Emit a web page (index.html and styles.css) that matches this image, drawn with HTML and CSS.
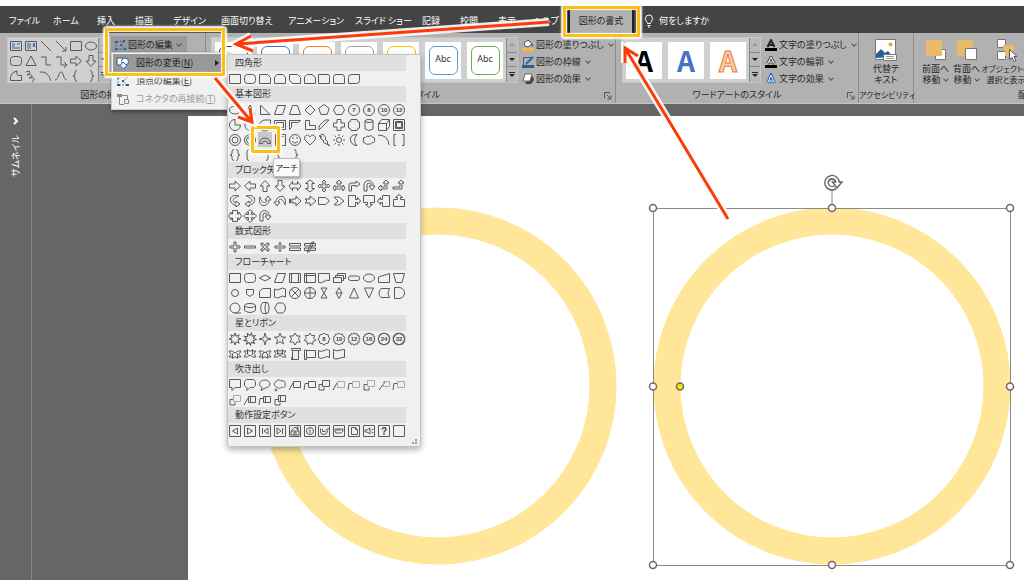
FILE: index.html
```html
<!DOCTYPE html>
<html lang="ja">
<head>
<meta charset="utf-8">
<title>図形の書式</title>
<link rel="stylesheet" href="styles.css">
</head>
<body>
<div class="app">
  <nav class="tabs" aria-label="リボン タブ">
    <button class="tab tab-kana">ファイル</button>
    <button class="tab tab-kana">ホーム</button>
    <button class="tab">挿入</button>
    <button class="tab">描画</button>
    <button class="tab tab-mid">デザイン</button>
    <button class="tab tab-wide">画面切り替え</button>
    <button class="tab tab-wide">アニメーション</button>
    <button class="tab tab-wide">スライド ショー</button>
    <button class="tab">記録</button>
    <button class="tab">校閲</button>
    <button class="tab tab-slim">表示</button>
    <button class="tab tab-slim">ヘルプ</button>
    <button class="tab tab-active">図形の書式</button>
    <button class="tab tab-tell"><svg width="10" height="14" viewBox="0 0 10 14"><path d="M3.5 9.500C3.500 8 1.500 7 1.500 4.500a3.500 3.500 0 0 1 7 0C8.500 7 6.500 8 6.500 9.500zM3.500 11.500h3M4 13h2" fill="none" stroke="#fff"/></svg>何をしますか</button>
  </nav>

  <div class="ribbon">
    <section class="group group-insert">
      <div class="tools">
        <div class="gallery"><div class="mini" data-set="insert"></div>
          <div class="scroller"><button class="off" aria-label="上へ"></button><button aria-label="下へ"></button><button class="more" aria-label="その他"></button></div></div>
        <button class="edit-shape"><svg width="13" height="12" viewBox="0 0 13 12"><path d="M3 3l6-1M2 3v6M10 3L7 6l4 4M3 10h7" fill="none" stroke="#2c66a8" stroke-dasharray="2 1"/><path d="M1 2h2v2H1zM9 1h2v2H9zM1 9h2v2H1zM10 9h2v2h-2zM6 5h2v2H6z" fill="#1d5fae"/></svg>図形の編集<i class="chev"></i></button>
      </div>
      <h2>図形の挿入</h2>
    </section>

    <section class="group group-style">
      <div class="tools">
        <div class="gallery thumbs">
          <button class="thumb" aria-label="スタイル 1"><span class="abc c-black"></span></button>
          <button class="thumb" aria-label="スタイル 2"><span class="abc c-blue"></span></button>
          <button class="thumb" aria-label="スタイル 3"><span class="abc c-orange"></span></button>
          <button class="thumb" aria-label="スタイル 4"><span class="abc c-gray"></span></button>
          <button class="thumb" aria-label="スタイル 5"><span class="abc c-gold"></span></button>
          <button class="thumb"><span class="abc c-sky"><span>Abc</span></span></button>
          <button class="thumb"><span class="abc c-green"><span>Abc</span></span></button>
          <div class="scroller"><button class="off" aria-label="上へ"></button><button aria-label="下へ"></button><button class="more" aria-label="その他"></button></div>
        </div>
        <div class="list">
          <button><svg width="12" height="12" viewBox="0 0 12 12"><path d="M0 9h12v3H0z" fill="#f0b94a"/><path d="M2 4l4-3 4 4-4 3-3-1z" fill="#fff" stroke="#555"/><path d="M9 4q3 1 2 4-2-1-2-4" fill="#2362a8"/></svg>図形の塗りつぶし<i class="chev"></i></button>
          <button><svg width="12" height="12" viewBox="0 0 12 12"><path d="M9 1.500H1.500V9" fill="none" stroke="#555"/><path d="M11 1L4 8" stroke="#2768ad" stroke-width="2"/><path d="M0 9h12v3H0z" fill="#345a86"/></svg>図形の枠線<i class="chev"></i></button>
          <button><svg width="12" height="12" viewBox="0 0 12 12"><path d="M3 10l1 1h5l3-4-1-4" fill="#444"/><path d="M3 1h7L8 8H1z" fill="#fff" stroke="#666" stroke-linejoin="round"/></svg>図形の効果<i class="chev"></i></button>
        </div>
      </div>
      <h2>図形のスタイル</h2>
      <button class="launcher" aria-label="図形の書式設定"><svg width="8" height="8" viewBox="0 0 8 8"><path d="M.5 6V.5H6M2.500 2.500l4 4M7 3.500V7H3.500" fill="none" stroke="#555"/></svg></button>
    </section>

    <section class="group group-art">
      <div class="tools">
        <div class="gallery thumbs">
          <button class="thumb art a-black">A</button>
          <button class="thumb art a-blue">A</button>
          <button class="thumb art a-orange">A</button>
          <div class="scroller"><button class="off" aria-label="上へ"></button><button aria-label="下へ"></button><button class="more" aria-label="その他"></button></div>
        </div>
        <div class="list">
          <button><svg width="12" height="12" viewBox="0 0 12 12"><path d="M2.500 8L6 1l3.500 7M4 6h4" fill="none" stroke="#222" stroke-width="2"/><path d="M0 9h12v3H0z"/></svg>文字の塗りつぶし<i class="chev"></i></button>
          <button><svg width="12" height="12" viewBox="0 0 12 12"><path d="M2.500 8L6 1l3.500 7M4 6h4" fill="none" stroke="#555" stroke-width="3"/><path d="M2.500 8L6 1l3.500 7M4 6h4" fill="none" stroke="#eee"/><path d="M0 9h12v3H0z"/></svg>文字の輪郭<i class="chev"></i></button>
          <button><svg width="12" height="12" viewBox="0 0 12 12"><path d="M2.500 10.500L6 2l3.500 8.500M4 8h4" fill="none" stroke="#276bb3" stroke-width="3"/><path d="M2.500 10.500L6 2l3.500 8.500M4 8h4" fill="none" stroke="#e4eef8"/></svg>文字の効果<i class="chev"></i></button>
        </div>
      </div>
      <h2>ワードアートのスタイル</h2>
      <button class="launcher" aria-label="文字の効果の設定"><svg width="8" height="8" viewBox="0 0 8 8"><path d="M.5 6V.5H6M2.500 2.500l4 4M7 3.500V7H3.500" fill="none" stroke="#555"/></svg></button>
    </section>

    <section class="group group-access">
      <div class="tools">
        <button class="big"><svg width="24" height="24" viewBox="0 0 24 24"><path d="M1.500 1.500h20v20h-20z" fill="#fff" stroke="#777"/><circle cx="16.500" cy="6.500" r="2" fill="#e8a33d"/><path d="M2 20v-4l5-5 4 4 3-2 5 6z" fill="#235f9e"/><path d="M9.500 16.500h13v6h-13z" fill="#fff" stroke="#777"/><path d="M12 18.500h8M12 20.500h8" stroke="#999"/></svg><span>代替テ<br>キスト</span></button>
      </div>
      <h2 class="tight">アクセシビリティ</h2>
    </section>

    <section class="group group-arrange">
      <div class="tools">
        <button class="big"><svg width="24" height="24" viewBox="0 0 24 24"><path d="M11.500 11.500h10v10h-10z" fill="#fff" stroke="#777"/><path d="M2 2h16v16H2z" fill="#e7bc68"/></svg><span>前面へ<br>移動<i class="chev"></i></span></button>
        <button class="big"><svg width="24" height="24" viewBox="0 0 24 24"><path d="M2 2h16v16H2z" fill="#e7bc68"/><path d="M10.500 10.500h11v11h-11z" fill="#fff" stroke="#777"/></svg><span>背面へ<br>移動<i class="chev"></i></span></button>
        <button class="big big-wide tight"><svg width="24" height="24" viewBox="0 0 24 24"><path d="M3.500 1.500h8v8h-8zM3.500 13.500h8v8h-8z" fill="#fff" stroke="#777"/><path d="M9 7h11v6h-5v5h-4v-6H9z" fill="#e7bc68"/><path d="M15.500 11.500v10l2.500-2 2 4 2-1-2-4h3z" fill="#fff" stroke="#555"/></svg><span>オブジェクトの<br>選択と表示</span></button>
      </div>
      <h2>配置</h2>
    </section>
  </div>

  <main class="workspace">
    <aside class="rail"><button class="expand" aria-label="サムネイルを開く"><svg width="8" height="8" viewBox="0 0 8 8"><path d="M2 1l3 3-3 3" fill="none" stroke="#fff" stroke-width="2"/></svg></button><span class="rail-label">サムネイル</span></aside>
    <div class="stage">
      <div class="slide">
        <svg class="drawing" viewBox="188 116 836 464" preserveAspectRatio="xMinYMin slice">
          <g fill="none" stroke="#ffe699" stroke-width="27"><circle cx="438" cy="386" r="165"/><circle cx="832" cy="386" r="165"/></g>
          <path d="M653.500 208.500h357v357h-357zM832 190v18" fill="none" stroke="#8a8a8a"/>
          <g fill="#fff" stroke="#6a6a6a" stroke-width="1.500"><circle cx="653" cy="208" r="3.500"/><circle cx="832" cy="208" r="3.500"/><circle cx="1010" cy="208" r="3.500"/><circle cx="653" cy="386.500" r="3.500"/><circle cx="1010" cy="386.500" r="3.500"/><circle cx="653" cy="565" r="3.500"/><circle cx="832" cy="565" r="3.500"/><circle cx="1010" cy="565" r="3.500"/><circle cx="680" cy="386.500" r="3.500" fill="#ffe100"/></g>
          <g fill="none"><path d="M835 187.500a5.500 5.500 0 1 1 2.500-4.500" stroke="#6a6a6a" stroke-width="5"/><path d="M832.500 182h9.500l-5 6z" fill="#fff" stroke="#6a6a6a" stroke-width="1.500"/><path d="M834.500 187.500a5.500 5.500 0 1 1 3-4.500" stroke="#fff" stroke-width="2"/></g>
        </svg>
      </div>
    </div>
  </main>

  <div class="menu" role="menu">
    <button class="item item-on" role="menuitem"><svg width="14" height="13" viewBox="0 0 14 13"><path d="M1 1h6v7H1z" fill="#fff" stroke="#456"/><circle cx="9" cy="4.500" r="3.500" fill="#fff" stroke="#2a5f9e"/><path d="M7 5l4 3.500L7.500 12 4 8.500z" fill="#e7f0fa" stroke="#2a5f9e"/></svg>図形の変更(<u>N</u>)<b class="sub"></b></button>
    <button class="item" role="menuitem"><svg width="14" height="13" viewBox="0 0 14 13"><path d="M3 3l7-1M2 3v6M11 3L7 6l4 4M3 10h7" fill="none" stroke="#777" stroke-dasharray="2 1"/><path d="M1 2h2v2H1zM10 1h2v2h-2zM1 9h3v2H1zM10 9h3v2h-3zM6 5h2v2H6z" fill="#1d5fae"/></svg>頂点の編集(<u>E</u>)</button>
    <button class="item" role="menuitem" disabled><svg width="14" height="13" viewBox="0 0 14 13"><path d="M1 1h5v3H1z" fill="#888"/><path d="M3.500 4v7.500H8M6 2.500h5.500V6M8.500 6.500h4v4h-4z" fill="none" stroke="#888"/></svg>コネクタの再接続(<u>T</u>)</button>
  </div>

  <div class="popup" role="menu" aria-label="図形の変更">
    <h3>四角形</h3><div class="shapes" data-set="rects"></div>
    <h3>基本図形</h3><div class="shapes" data-set="basic"></div>
    <h3>ブロック矢印</h3><div class="shapes" data-set="arrows"></div>
    <h3>数式図形</h3><div class="shapes" data-set="math"></div>
    <h3>フローチャート</h3><div class="shapes" data-set="flow"></div>
    <h3>星とリボン</h3><div class="shapes" data-set="stars"></div>
    <h3>吹き出し</h3><div class="shapes" data-set="callouts"></div>
    <h3>動作設定ボタン</h3><div class="shapes" data-set="actions"></div>
    <div class="grip"></div>
  </div>

  <div class="mark mark-edit"></div>
  <div class="mark mark-tab"></div>
  <div class="mark mark-arch"></div>
  <svg class="arrows" width="1024" height="580" viewBox="0 0 1024 580" aria-hidden="true">
    <defs><g id="trio"><path d="M549 22L238 44M251 36L236 44l17 7"/><path d="M215 78l36 43M250 108l2 14-14-5"/><path d="M728 219L625 48M625 63V48l13 8"/></g></defs>
    <use href="#trio" class="halo"/><use href="#trio" class="red"/>
  </svg>
  <div class="tip" role="tooltip">アーチ</div>
</div>
<script src="shapes.js"></script>
</body>
</html>
```
FILE: styles.css
```css
* { box-sizing: border-box; }
body {
  margin: 0;
  background: #fff;
  color: #262626;
  font-family: "Noto Sans CJK JP", sans-serif;
  font-size: 9px;
  line-height: 12px;
  font-feature-settings: "palt";
}
button {
  margin: 0; padding: 0; border: 0; background: none;
  color: inherit; font: inherit; font-feature-settings: inherit;
  white-space: nowrap;
}
svg { display: block; flex: none; }
h2, h3 { margin: 0; font-weight: 400; font-size: 9px; }
.app { position: relative; display: flex; flex-direction: column; height: 100vh; padding-top: 6px; overflow: hidden; }

/* Tabs */
.tabs { display: flex; flex: none; align-items: stretch; height: 27px; padding: 3px 9px 0; background: #444; color: #fff; }
.tab { display: flex; flex: none; align-items: center; width: 38px; }
.tab-kana { width: 44px; }
.tab-mid { width: 48px; }
.tab-wide { width: 67px; }
.tab-slim { width: 35px; }
.tab-active { justify-content: center; width: 66px; background: #b1b1b1; color: #262626; border: solid #222; border-width: 0 2px; }
.tab-tell { gap: 5px; width: auto; margin-left: 10px; }

/* Ribbon */
.ribbon { display: grid; grid-template-columns: 206px 410px 243px 55px 1fr; flex: none; height: 71px; background: #b1b1b1; border-bottom: 1px solid #c4c4c4; }
.group { position: relative; display: flex; flex-direction: column; min-width: 0; padding: 3px 0 1px; border-right: 1px solid #8c8c8c; }
.tools { display: flex; flex: 1; align-items: flex-start; }
.group h2 { text-align: center; line-height: 14px; white-space: nowrap; }
.group-insert .tools { padding-left: 7px; gap: 1px; }
.group-style .tools { padding-left: 5px; gap: 4px; }
.group-art .tools { padding-left: 6px; gap: 4px; }
.group-arrange { border-right: 0; padding-left: 6px; overflow: hidden; }
.group-arrange h2 { padding-left: 98px; text-align: left; }
.group .tight { font-size: 8px; }
.launcher { position: absolute; right: 3px; bottom: 3px; }
.gallery { display: flex; height: 46px; margin-top: 1px; background: #d0d0d0; border: 1px solid #c6c6c6; }
.mini { display: grid; grid-template-columns: repeat(6, 15px); grid-auto-rows: 15px; }
.mini button { display: grid; place-items: center; }
.thumbs { padding-left: 3px; gap: 6px; align-items: center; }
.thumb { width: 36px; height: 37px; background: #fff; display: grid; place-items: center; }
.thumbs .scroller { margin-left: -3px; }
.scroller { display: grid; grid-template-rows: repeat(3, 1fr); align-self: stretch; width: 11px; background: #b9b9b9; border-left: 1px solid #888; }
.scroller button { display: grid; place-content: center; justify-items: center; gap: 1px; border-bottom: 1px solid #888; }
.scroller button:last-child { border-bottom: 0; }
.scroller button::after { content: ""; width: 0; height: 0; border: 3px solid transparent; border-top-color: #222; border-bottom: 0; }
.scroller .off::after { border-top: 0; border-bottom: 3px solid #999; }
.scroller .more::before { content: ""; width: 6px; height: 1px; background: #222; }
.abc { display: flex; justify-content: center; width: 29px; height: 29px; padding-top: 6px; border: 1px solid; border-radius: 6px; font: 9px/12px "Noto Sans", sans-serif; }
.abc span { color: #333; }
.c-black { border-color: #222; }
.c-blue { border-color: #4472c4; }
.c-orange { border-color: #ed7d31; }
.c-gray { border-color: #a5a5a5; }
.c-gold { border-color: #ffc000; }
.c-sky { border-color: #5b9bd5; }
.c-green { border-color: #70ad47; }
.art { font: 700 28px/37px "Noto Sans CJK JP", sans-serif; }
.a-black { color: #000; }
.a-blue { color: #4472c4; }
.a-orange { color: #f8cbad; -webkit-text-stroke: 1px #ed7d31; }
.list { display: flex; flex-direction: column; }
.list button { display: flex; align-items: center; gap: 2px; height: 17px; }
.chev { display: inline-block; flex: none; width: 4px; height: 4px; margin: 0 1px 2px 3px; border: solid #555; border-width: 0 1px 1px 0; transform: rotate(45deg); }
.edit-shape { display: flex; align-items: center; gap: 1px; width: 76px; height: 17px; padding-left: 3px; background: #9b9b9b; }
.big { display: flex; flex: none; flex-direction: column; align-items: center; width: 31px; line-height: 11px; padding-top: 2px; gap: 1px; }
.group-access .tools { justify-content: center; }
.big-wide { width: 48px; }

/* Workspace */
.workspace { display: flex; flex: 1; min-height: 0; background: #666; }
.rail { display: flex; flex-direction: column; align-items: center; gap: 10px; width: 32px; padding-top: 13px; border-right: 1px solid #868686; color: #fff; }
.rail-label { writing-mode: vertical-rl; text-orientation: sideways; transform: rotate(180deg); line-height: 14px; }
.stage { display: flex; flex: 1; min-width: 0; padding: 12px 0 0 156px; }
.slide { flex: 1; min-width: 0; background: #fff; }
.drawing { width: 100%; height: 100%; }

/* Floating menus */
.menu { position: absolute; left: 111px; top: 52px; width: 118px; padding: 1px; background: #f0f0f0; border: 1px solid #ccc; box-shadow: 1px 2px 4px rgba(0, 0, 0, .4); }
.item { display: flex; align-items: center; width: 100%; height: 18px; padding: 0 8px 0 3px; white-space: pre; color: #444; }
.item svg { margin-right: 6px; }
.item-on { background: #999; color: #222; }
.item:disabled { color: #9a9a9a; }
.sub { margin-left: auto; border: 3px solid transparent; border-left: 4px solid #222; border-right: 0; }
.popup { position: absolute; left: 227px; top: 54px; width: 194px; padding: 0 14px 8px 0; background: #f0f0f0; border: 1px solid #c4c4c4; border-radius: 0 0 3px 3px; box-shadow: 0 3px 6px rgba(0, 0, 0, .3); }
.popup h3 { height: 16px; padding-left: 7px; background: #e0e0e0; color: #333; line-height: 16px; }
.shapes { display: grid; grid-template-columns: repeat(12, 1fr); grid-auto-rows: 15px; }
.shapes button { display: grid; place-items: center; }
.shapes .on { background: #c8c8c8; }
.glyph { fill: none; stroke: #5a5a5a; stroke-width: 1; overflow: visible; }
.glyph text { fill: #444; stroke: none; font: 700 6px "Liberation Sans", sans-serif; text-anchor: middle; }
.glyph .big-text { font-size: 10px; }
.glyph .thin { stroke: #aaa; }
.glyph .blue { stroke: #2768ad; }
.grip { position: absolute; right: 3px; bottom: 2px; width: 5px; height: 5px; border: dotted #999; border-width: 0 2px 2px 0; }
.tip { position: absolute; left: 273px; top: 158px; width: 27px; height: 19px; background: #fafafa; border: 1px solid #bbb; border-radius: 2px; box-shadow: 1px 2px 3px rgba(0, 0, 0, .3); font-size: 8px; line-height: 17px; text-align: center; white-space: nowrap; }

/* Annotations */
.mark { position: absolute; border: 3px solid #fdbf12; border-radius: 2px; box-shadow: 0 0 2px 2px #fff, inset 0 0 1px 1px #fff; pointer-events: none; }
.mark-edit { left: 105px; top: 28px; width: 120px; height: 48px; }
.mark-tab { left: 563px; top: 6px; width: 77px; height: 31px; }
.mark-arch { left: 251px; top: 126px; width: 29px; height: 27px; }
.arrows { position: absolute; left: 0; top: 0; fill: none; pointer-events: none; }
.halo { stroke: #fff; stroke-width: 8; stroke-opacity: .9; }
.red { stroke: #ff3a0a; stroke-width: 3; }
```
FILE: shapes.js
```js
const P = (d, c) => `<path d="${d}"${c ? ` class="${c}"` : ''}/>`;
const C = (r, x = 7, y = 7) => `<circle cx="${x}" cy="${y}" r="${r}"/>`;
const E = (rx, ry, x = 7, y = 7) => `<ellipse cx="${x}" cy="${y}" rx="${rx}" ry="${ry}"/>`;
const T = s => `<text x="7" y="9.200">${s}</text>`;
const G = (t, s) => `<g transform="${t}">${s}</g>`;
const turn = (a, s) => G(`rotate(${a} 7 7)`, s);
const flip = s => G('matrix(-1 0 0 1 14 0)', s);
const poly = (n, R, r = R, off = 0) => {
  const k = r === R ? n : n * 2, pts = [];
  for (let i = 0; i < k; i++) {
    const a = (i + off) * 2 * Math.PI / k - Math.PI / 2, q = i % 2 ? r : R;
    pts.push((7 + q * Math.cos(a)).toFixed(1) + ',' + (7 + q * Math.sin(a)).toFixed(1));
  }
  return `<polygon points="${pts.join(' ')}"/>`;
};
const box = P('M1.500 2.500h11v9h-11z');
const round = '<rect x="1.500" y="2.500" width="11" height="9" rx="3"/>';
const right = P('M1.500 5h5.500V2l5.500 5-5.500 5V9H1.500z');
const ribbon = P('M1 4h3.500V2.500L6 4h2l1.500-1.500V4H13l-2 2.500L13 10H9.500L8 8.500H6L4.500 10H1l2-3.500zM4.500 4v3L6 8.500M9.500 4v3L8 8.500');
const both = P('M1 7l3.500-4.500V5h5V2.500L13 7l-3.500 4.500V9h-5v2.500z');
const uturn = P('M2 12V6a4.500 4.500 0 0 1 9 0v1h2l-3 4-3-4h2V6a2 2 0 0 0-4 0v6z');
const curved = P('M11 2C4 0 1 4 3 8c1 2 3 3 5 3v2l4-3-4-3v2C4 8 4 4 11 2z');
const arrowBox = P('M1.500 1.500h7v4h2v-2l3 3.500-3 3.500v-2h-2v4h-7z');
const brace = P('M8 1.500q-2 0-2 2v1.500q0 2-2 2 2 0 2 2v1.500q0 2 2 2');
const tag = c => P('M1 12l4-7') + P('M5.500 3.500h7v6h-7z', c);
const hook = c => P('M1 12l1-6.500h3') + P('M5.500 3.500h7v6h-7z', c);
const loop = c => P('M5 6.500H2V12h5V9.500') + P('M5.500 2.500h7v6h-7z', c);
const key = s => P('M1.500 1.500h11v11h-11z') + s;

const sets = {
  insert: [
    box + P('M3 5h3M3 7h3M3 9h8M8 5h3', 'blue'), box + P('M4 4v6M6 4v6M9 8l1-4 1 4', 'blue'), P('M2 2l10 10'), P('M2 2l10 10M12 8v4H8'), box, E(5.5, 4),
    round, P('M7 2l5 9.500H2z'), P('M2 3h5v8h5'), P('M2 3h5v8h6M10 8l3 3-3 3'), right, turn(90, right),
    P('M4 3.500l4-1.500q-1 3 1 4.500h3.500v5h-11q-1-4 2.500-8z'), P('M2 3q4-2 4 0T3 6q5-1 5 1t-3 2q5-1 5 1t-2 3'), P('M1 3q8-1 11 9'), P('M1 11C5 11 4 3 7 3s2 8 6 8'), brace, flip(brace)
  ],
  rects: [
    box, round, P('M1.500 2.500h8l3 3v6h-11z'), P('M4 2.500h6l2.500 3v6h-11v-6z'), P('M1.500 2.500h8l3 3v6H5l-3.500-3z'),
    P('M4 2.500h5l3.500 3v6h-11V5z'), P('M1.500 2.500H11q1.500 0 1.500 2v7h-11z'), P('M4 2.500h6q2.500 0 2.500 3v6h-11v-6q0-3 2.500-3z'), P('M4 2.500h8.500v6q0 3-3 3h-8v-6q0-3 2.500-3z')
  ],
  basic: [
    E(5.5, 4), P('M7 2l5 9.500H2z'), P('M2.500 2v9.500H12z'), P('M4.500 2.500h8l-3 9h-8z'), P('M4.500 2.500h5l3 9h-11z'), P('M7 2l5 5-5 5-5-5z'), poly(5, 5.5), P('M4 2.500h6L12.500 7 10 11.500H4L1.500 7z'),
    C(5.5) + T(7), C(5.5) + T(8), C(5.5) + T(10), C(5.5) + T(12),
    P('M7 1.500V7h5.500A5.500 5.500 0 1 1 7 1.500'), P('M7 1.500A5.500 5.500 0 1 0 12 10z'), P('M12.500 2v5A5.500 5.500 0 1 1 7 2z'), box + P('M3.500 4.500h7v5h-7z'), P('M1.500 2.500h11l-2 2h-7v5l-2 2z'), P('M2.500 2.500h4v5h6v4h-10z'), P('M2 12V8l6-6h4z'), P('M5 1.500h4V5h3.500v4H9v3.500H5V9H1.500V5H5z'), P('M4 1.500h6q0 2.500 2.500 2.500v6Q10 10 10 12.500H4Q4 10 1.500 10V4Q4 4 4 1.500z'), E(4, 1.5, 7, 3) + P('M3 3v8q4 3 8 0V3'), P('M1.500 5.500h8v7h-8zM1.500 5.500l3-4h8l-3 4M12.500 1.500v7l-3 4'), P('M1.500 1.500h11v11h-11zM4.500 4.500h5v5h-5zM3.500 3.500h7v7h-7z'),
    C(5.5) + C(3), C(5.5) + C(3.5) + P('M4 4l6 6'), P('M1.500 10.500a5.500 5.500 0 0 1 11 0h-3a2.500 2.500 0 0 0-5 0z'), P('M2.500 1.500h10v11h-10zM4.500 3.500h6'), C(5.5) + P('M4 8q3 4 6 0M5 4v2M9 4v2'), P('M7 12L2 7C0 3 5 0 7 4c2-4 7-1 5 3z'), P('M2 3l4-2 3 4-1 1 3 3-1 1 3 3-7-4 1-1-4-3 2-1z'), C(2.5) + P('M7 1v2M7 11v2M1 7h2M11 7h2M2.500 2.500L4 4M10 10l1.500 1.500M11.500 2.500L10 4M4 10l-1.500 1.500'), P('M10 1.500Q1 2 4 9q2 4 6 3.500Q5 8 10 1.500z'), P('M3 10Q0 9.500 1.500 7 .5 4 3.500 4.500 5 2 7 3.500 10 1.500 10.500 4q3 .5 2 3 1 3-2.500 2.500-1 2.500-3.500 1.500-2.500 1-3.500-1z'), P('M1 2q10 0 11 10'), P('M4 1.500H2v11h2M10 1.500h2v11h-2'),
    G('translate(-2 0)', brace) + G('translate(2 0)', flip(brace)), P('M6 1.500Q4 1.500 4 4v6q0 2.500 2 2.500'), P('M8 1.500q2 0 2 2.500v6q0 2.500-2 2.500'), brace, flip(brace)
  ],
  arrows: [
    right, flip(right), turn(-90, right), turn(90, right), both, turn(90, both),
    P('M7 1l2 2H8v3h3V5l2 2-2 2V8H8v3h1l-2 2-2-2h1V8H3v1L1 7l2-2v1h3V3H5z'), P('M7 1l3 3H8v4h3V6l2 3-2 3v-2H3v2L1 9l2-3v2h3V4H4z'), P('M2 12V6q0-2 2-2h5V2l4 3-4 3V6.500H4.500V12z'), uturn, P('M1 9l3-3v2h4V4H6l3-3 3 3h-2v6H4v2z'), P('M1 8h7V4H6l3-3 3 3h-2v6H1z'),
    curved, flip(curved), turn(-90, curved), turn(90, curved), P('M1.500 5h1v4h-1zM4 5h4V2l5 5-5 5V9H4z'), P('M2 5h5V2l6 5-6 5V9H2l2-2z'), P('M1.500 3.500h7L12.500 7l-4 3.500h-7z'), P('M2 3h5l5 4-5 4H2l4-4z'), arrowBox, turn(90, arrowBox), flip(arrowBox), turn(-90, arrowBox),
    P('M4.500 1.500h5V5H11V3l2.500 4L11 11V9H9.500v3.500h-5V9H3v2L.5 7 3 3v2h1.500z'), P('M7 .5l3 3H8.500v2h2V4l3 3-3 3V8.500h-2v2H10l-3 3-3-3h1.500v-2h-2V10l-3-3 3-3v1.500h2v-2H4z'), uturn
  ],
  math: [
    P('M6 2h2v4h4v2H8v4H6V8H2V6h4z'), P('M1.500 6h11v2h-11z'), turn(45, P('M6 2h2v4h4v2H8v4H6V8H2V6h4z')), P('M2 6h10v2H2z') + C(1, 7, 3.5) + C(1, 7, 10.5), P('M1.500 3.500h11v2.500h-11zM1.500 8h11v2.500h-11z'), P('M1.500 3.500h11v2.500h-11zM1.500 8h11v2.500h-11zM4 12l5-10 2 0-5 10z')
  ],
  flow: [
    box, round, P('M7 4l5.500 3L7 10 1.500 7z'), P('M4.500 2.500h8l-3 9h-8z'), box + P('M3.500 2.500v9M10.500 2.500v9'), box + P('M3.500 2.500v9M1.500 4.500h11'), P('M1.500 2.500h11v7q-3-1-5.500 1t-5.500 1z'), P('M1.500 6.500h8v5h-8zM3.500 6V4.500h8v5H10M5.500 4V2.500h8v5H12'), '<rect x="1.500" y="5" width="11" height="4.500" rx="2"/>', E(5.5, 4), P('M1.500 6l11-3.500v9h-11z'), P('M1.500 2.500h11l-2.500 9H4z'),
    C(3.5), P('M3.500 3.500h7V8L7 10.500 3.500 8z'), P('M4.500 2.500h8v9h-11v-6z'), P('M1.500 3q3 2 5.500 0t5.500 0v8q-3-2-5.500 0t-5.500 0z'), C(5.5) + P('M3 3l8 8M11 3l-8 8'), C(5.5) + P('M7 1.500v11M1.500 7h11'), P('M4 2h6l-6 10h6z'), P('M7 1.500L10 7l-3 5.500L4 7zM4 7h6'), P('M7 2l4.500 10h-9z'), P('M2.500 2h9L7 12z'), P('M4 2.500h8.500q-3 5 0 9H4q-4-4 0-9z'), P('M2.500 1.500H7a5.500 5.500 0 0 1 0 11H2.500z'),
    C(5) + P('M7 12h6'), E(5.5, 2, 7, 4.5) + P('M1.500 4.500v5q5.500 4 11 0v-5'), E(2, 5.5, 9) + P('M9 1.500H5c-3 1-3 10 0 11h4'), P('M4.500 2h5q3 1 3 5t-3 5h-5l-3-5z')
  ],
  stars: [
    poly(8, 6, 3), turn(15, poly(9, 6.2, 3.5)), poly(4, 6, 1.8), poly(5, 6, 2.5), poly(6, 6, 3.5), poly(7, 6, 3.8),
    poly(8, 6, 5) + T(8), poly(10, 6, 5) + T(10), poly(12, 6.2, 5) + T(12), poly(16, 6.2, 5) + T(16), poly(24, 6.2, 5) + T(24), poly(32, 6.2, 5) + T(32),
    turn(180, ribbon), ribbon, turn(180, ribbon) + P('M5 6q2-2 4 0'), ribbon + P('M5 6q2 2 4 0'), P('M4.500 12.500v-8l-1-3h9v2h-2v9h-7v-2h1M4 3.500h8'), P('M1.500 3v9.500h2v-2h9v-7h-9v7M1.500 3h2v1'), P('M1.500 3.500q3 2 5.500 0t5.500 0v7q-3-2-5.500 0t-5.500 0z'), P('M1.500 2.500q2 2 5.500 1t5.500-1v8q-2-1-5.500 1-3.500 1-5.500 0z')
  ],
  callouts: [
    P('M1.500 1.500h11v8H7l-3 3v-3H1.500z'), P('M3.500 1.500h7l2 2v4l-2 2H7l-3 3v-3h-.5l-2-2v-4z'), P('M3 12.500L4 9.500C0 8 1 2 7 2s7 7.500 0 8z'), P('M3.500 9C0 8 1 4 3 4c1-3 4-2 5-1 3-1 5 1 4 3 1 3-1 4-3 3-2 2-4 1-5.500 0') + C(1, 3, 12), tag(), hook(), loop(), tag('thin'), hook('thin'), loop('thin'), P('M2 12l6-8') + P('M6.500 3.500h6v5h-6z', 'thin'), hook('thin'),
    loop('thin'), tag() + P('M7.500 3v6'), hook() + P('M7.500 3v6'), loop() + P('M7.500 3v6')
  ],
  actions: [
    key(P('M9.500 4v6l-5-3z')), key(P('M4.500 4v6l5-3z')), key(P('M10 4v6L6 7zM4.500 4v6')), key(P('M4 4v6l4-3zM9.500 4v6')), key(P('M3 7l4-4 4 4v4H3zM6 11V8h2v3M9 5V3h1v3M3 7h8')), key(C(3.5) + P('M7 6v3M7 4.500v1')), key(P('M3.500 4.500v3q0 3 3 3 4 0 4-4l1-2M10.500 4.500l-2 2M5.500 5v2.500h3')), key(P('M3 5h8v2L9 9H4L3 7zM4 6h5')), key(P('M4.500 3.500h4l2 2v5h-6zM8.500 3.500v2h2')), key(P('M3 6h2l3-2v6L5 8H3zM9.500 6l2-1M9.500 8l2 1')), key('<text class="big-text" x="7" y="10.500">?</text>'), key('')
  ]
};

document.querySelectorAll('[data-set]').forEach(host => {
  const name = host.dataset.set;
  host.innerHTML = sets[name].map((s, i) => {
    const on = name === 'basic' && i === 26 ? ' class="on"' : '';
    return `<button${on} aria-label="図形 ${i + 1}"><svg class="glyph" width="14" height="14" viewBox="0 0 14 14">${s}</svg></button>`;
  }).join('');
});
```
